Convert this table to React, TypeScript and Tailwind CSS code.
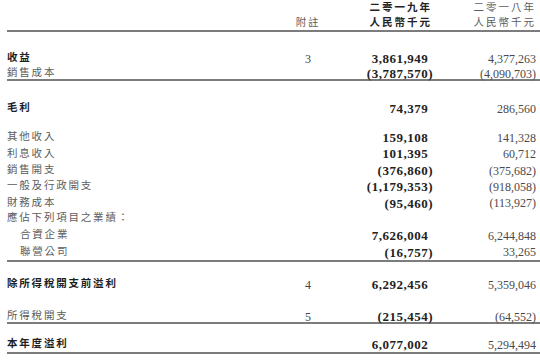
const FONT = '"Liberation Serif", "Noto Sans CJK TC", serif'

type Row = {
  label: string
  bold?: boolean
  indent?: boolean
  note?: string
  a?: string
  b?: string
  h: string
  mt?: string
}

function Line({ mt = '' }: { mt?: string }) {
  return <div className={`ml-[7px] h-[2px] bg-[#7c7c7c] ${mt}`} />
}

function Amount({ value, bold }: { value?: string; bold?: boolean }) {
  if (!value) return null
  const neg = value.startsWith('(')
  if (!bold) return <span>{value}</span>
  return (
    <span>
      {value}
      {!neg && <span className="invisible">)</span>}
    </span>
  )
}

function TableRow({ r }: { r: Row }) {
  return (
    <div
      className={`grid grid-cols-[281px_40px_105px_103px] items-center pl-[7px] ${r.h} ${r.mt ?? ''}`}
    >
      <div
        className={`pb-[1.5px] text-[10.5px] tracking-[1.8px] whitespace-nowrap ${r.indent ? 'pl-[13px]' : ''} ${
          r.bold ? 'font-bold text-[#1e1e1e]' : 'text-[#5c5c5c]'
        }`}
      >
        {r.label}
      </div>
      <div className="text-center text-[12px] text-[#444]">{r.note}</div>
      <div className="text-right text-[13px] font-bold tracking-[0.5px] text-[#222]">
        <Amount value={r.a} bold />
      </div>
      <div className="text-right text-[12px] text-[#4a4a4a]">
        <Amount value={r.b} />
      </div>
    </div>
  )
}

const MID: Row[] = [
  { label: '其他收入', a: '159,108', b: '141,328', h: 'h-[16.4px]', mt: 'mt-[14px]' },
  { label: '利息收入', a: '101,395', b: '60,712', h: 'h-[16.4px]' },
  { label: '銷售開支', a: '(376,860)', b: '(375,682)', h: 'h-[16.4px]' },
  { label: '一般及行政開支', a: '(1,179,353)', b: '(918,058)', h: 'h-[16.4px]' },
  { label: '財務成本', a: '(95,460)', b: '(113,927)', h: 'h-[16.4px]' },
  { label: '應佔下列項目之業績：', h: 'h-[16.4px]' },
  { label: '合資企業', indent: true, a: '7,626,004', b: '6,244,848', h: 'h-[16.4px]' },
  { label: '聯營公司', indent: true, a: '(16,757)', b: '33,265', h: 'h-[16.4px]' },
]

export default function App() {
  return (
    <div className="h-[363px] w-[540px] overflow-hidden bg-white" style={{ fontFamily: FONT }}>
      <div className="grid grid-cols-[281px_40px_105px_103px] pl-[7px] text-[10.5px] leading-[15px]">
        <div />
        <div />
        <div className="pr-[1px] text-right font-bold tracking-[2px] text-[#222]">二零一九年</div>
        <div className="text-right tracking-[2px] text-[#5c5c5c]">二零一八年</div>
        <div />
        <div className="text-center tracking-[1.8px] text-[#5c5c5c]">附註</div>
        <div className="pr-[1px] text-right font-bold tracking-[2px] text-[#222]">人民幣千元</div>
        <div className="text-right tracking-[2px] text-[#5c5c5c]">人民幣千元</div>
      </div>
      <Line />

      <TableRow r={{ label: '收益', bold: true, note: '3', a: '3,861,949', b: '4,377,263', h: 'h-[15px]', mt: 'mt-[17px]' }} />
      <TableRow r={{ label: '銷售成本', a: '(3,787,570)', b: '(4,090,703)', h: 'h-[15px]' }} />
      <Line />

      <TableRow r={{ label: '毛利', bold: true, a: '74,379', b: '286,560', h: 'h-[15px]', mt: 'mt-[18px]' }} />

      {MID.map((r) => (
        <TableRow key={r.label} r={r} />
      ))}
      <Line mt="mt-[1px]" />

      <TableRow
        r={{ label: '除所得稅開支前溢利', bold: true, note: '4', a: '6,292,456', b: '5,359,046', h: 'h-[15px]', mt: 'mt-[13px]' }}
      />
      <TableRow r={{ label: '所得稅開支', note: '5', a: '(215,454)', b: '(64,552)', h: 'h-[15px]', mt: 'mt-[17px]' }} />
      <Line />

      <TableRow r={{ label: '本年度溢利', bold: true, a: '6,077,002', b: '5,294,494', h: 'h-[15px]', mt: 'mt-[11px]' }} />
      <Line mt="mt-[2px]" />
    </div>
  )
}
